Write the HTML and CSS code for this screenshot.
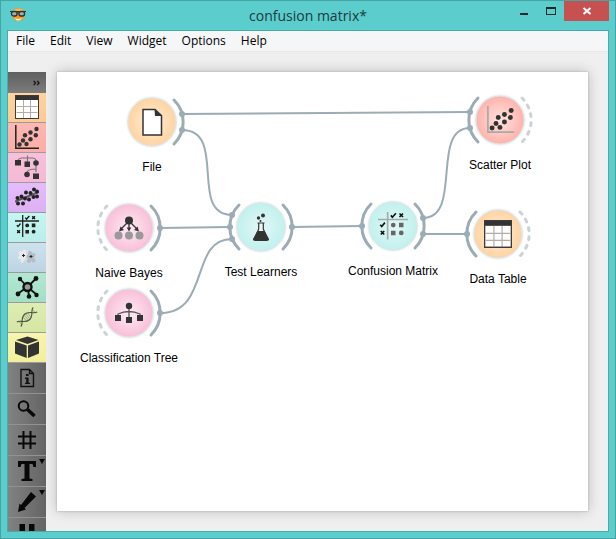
FILE: index.html
```html
<!DOCTYPE html>
<html lang="en">
<head>
<meta charset="utf-8">
<title>confusion matrix*</title>
<link rel="stylesheet" href="styles.css">
</head>
<body>
<svg class="defs" aria-hidden="true">
  <defs>
    <radialGradient id="orange"><stop offset="0" stop-color="#fff0dc"/><stop offset="1" stop-color="#ffd3a0"/></radialGradient>
    <radialGradient id="pink"><stop offset="0" stop-color="#fdebf3"/><stop offset="1" stop-color="#f9bfd8"/></radialGradient>
    <radialGradient id="aqua"><stop offset="0" stop-color="#e4f7f6"/><stop offset="1" stop-color="#c0f1ee"/></radialGradient>
    <radialGradient id="red"><stop offset="0" stop-color="#ffe3e0"/><stop offset="1" stop-color="#ffb3ac"/></radialGradient>
    <symbol id="table" viewBox="0 0 24 24">
      <path d="M.5.5h23v23H.5z" fill="#fff" stroke="#333"/>
      <path d="M1.500 11.500h21M1.500 17.500h21M8.500 5v18M15.500 5v18" fill="none" stroke="#b5aca6"/>
      <path d="M0 0h24v5H0z" fill="#333"/>
      <path d="M.5.5h23v23H.5z" fill="none" stroke="#3c3c3c"/>
    </symbol>
    <symbol id="scatter" viewBox="0 0 24 24">
      <path class="axis" d="M.8 0v23.200H24" fill="none" stroke-width="1.500"/>
      <g fill="#333"><circle cx="4.500" cy="19.500" r="2.200"/><circle cx="8" cy="15.500" r="2.200"/><circle cx="11.500" cy="19" r="2.200"/><circle cx="10" cy="10.300" r="2.200"/><circle cx="15.500" cy="14.300" r="2.200"/><circle cx="15.500" cy="7.500" r="2.200"/><circle cx="20.800" cy="10.300" r="2.200"/><circle cx="21.500" cy="4" r="2.200"/></g>
    </symbol>
    <symbol id="matrix" viewBox="0 0 24 24">
      <path class="axis" d="M0 6h24M7.700 0v22" fill="none" stroke-width="1.300"/>
      <path d="M10.300 2.700l1.200 1.500L14.300 1M1.800 10.200L3 11.600 5.500 8.500M17.200 1.200l2.800 2.800m0-2.800l-2.800 2.800M2.200 15.200L5 18m0-2.800L2.200 18" fill="none" stroke="#111" stroke-width="1.300"/>
      <g class="cells"><circle cx="12.200" cy="10.400" r="1.900"/><path d="M16.800 8.600h3.600v3.600h-3.600zM10.400 14.900H14v3.600h-3.600z"/><circle cx="18.600" cy="16.700" r="1.900"/></g>
    </symbol>
  </defs>
</svg>

<div class="window">
  <header class="titlebar">
    <svg class="app-icon" viewBox="0 0 16 16" aria-hidden="true">
      <circle cx="8.500" cy="7.500" r="6.500" fill="#f79a20"/>
      <ellipse cx="8.500" cy="4" rx="4.500" ry="2.200" fill="#ffb64f"/>
      <path d="M5 11c2 1.500 5 1.500 7-.5-1 4-6 4-7 .5z" fill="#fff0c8"/>
      <rect x="1.500" y="4.500" width="5.500" height="4.500" rx="2" fill="#9ab0b4" stroke="#293335" stroke-width="1.300"/>
      <rect x="9" y="4.500" width="5.500" height="4.500" rx="2" fill="#9ab0b4" stroke="#293335" stroke-width="1.300"/>
      <path d="M0 4.500h16M7 6h2" stroke="#293335"/>
    </svg>
    <h1 class="title">confusion matrix*</h1>
    <div class="controls">
      <button class="control" aria-label="Minimize"><svg viewBox="0 0 27 20"><path d="M10 12h8v2h-8z" fill="#16292a"/></svg></button>
      <button class="control" aria-label="Maximize"><svg viewBox="0 0 27 20"><path d="M9 6h10v8H9zm1 2v5h8V8z" fill="#16292a" fill-rule="evenodd"/></svg></button>
      <button class="control close" aria-label="Close"><svg viewBox="0 0 45 20"><path d="M19.500 7l7 6m0-6l-7 6" stroke="#fff" stroke-width="2"/></svg></button>
    </div>
  </header>

  <div class="client">
    <nav class="menu" aria-label="Main menu">
      <button>File</button><button>Edit</button><button>View</button><button>Widget</button><button>Options</button><button>Help</button>
    </nav>

    <main class="workspace">
      <div class="toolbar" role="toolbar" aria-label="Widgets">
        <button class="expand" aria-label="Expand"><svg viewBox="0 0 8 6"><path d="M.7.500L3 3 .7 5.500M4.700.500L7 3 4.700 5.500" fill="none" stroke="#111" stroke-width="1.400"/></svg></button>
        <button class="tool data" aria-label="Data"><svg><use href="#table"/></svg></button>
        <button class="tool visualize" aria-label="Visualize"><svg><use href="#scatter"/></svg></button>
        <button class="tool classify" aria-label="Classify"><svg viewBox="0 0 24 24">
          <path d="M3 6Q3 3.500 7 3h10q4 0 4 3M12.500.500V7M21 7v10M12 18q0-4 9-4" fill="none" stroke="#777" stroke-width="1.200"/>
          <g fill="#333"><path d="M0 5h6v5.500H0zM9.500 6.500h5.500V12H9.500zM18 18.500h6V24h-6z"/><circle cx="21" cy="8" r="2.800"/><circle cx="12" cy="19.500" r="2.800"/></g></svg></button>
        <button class="tool regression" aria-label="Regression"><svg viewBox="0 0 24 24">
          <path d="M0 16.500L24 7" stroke="#555" stroke-width="2"/>
          <g fill="#222"><circle cx="2.500" cy="13" r="2"/><circle cx="3" cy="18.500" r="2"/><circle cx="8" cy="18.500" r="2"/><circle cx="6.500" cy="11.500" r="2"/><circle cx="10" cy="13.500" r="2"/><circle cx="11" cy="7.500" r="2"/><circle cx="14" cy="14.500" r="2"/><circle cx="15.500" cy="8" r="2"/><circle cx="18.500" cy="12" r="2"/><circle cx="19" cy="4.500" r="2"/><circle cx="22" cy="6.500" r="2"/><circle cx="22" cy="11.500" r="2"/></g></svg></button>
        <button class="tool evaluate" aria-label="Evaluate"><svg><use href="#matrix"/></svg></button>
        <button class="tool unsupervised" aria-label="Unsupervised"><svg viewBox="0 0 24 24">
          <g fill="#e9e9e9"><circle cx="5.500" cy="8" r="2"/><circle cx="9.500" cy="6.500" r="2"/><circle cx="5" cy="12.500" r="2"/><circle cx="8.500" cy="13.500" r="2"/><circle cx="8" cy="10" r="3.500"/><circle cx="7" cy="16" r="1.800"/></g>
          <g fill="#b6bcc0"><circle cx="15" cy="8" r="2"/><circle cx="18.500" cy="10" r="2"/><circle cx="13.500" cy="11.500" r="2"/><circle cx="16" cy="12" r="3.500"/><circle cx="14" cy="16" r="2"/><circle cx="18.500" cy="15.500" r="2"/></g>
          <path d="M7 10.500h3M8.500 9v3M14.500 11.500h3M16 10v3" stroke="#222"/></svg></button>
        <button class="tool network" aria-label="Network"><svg viewBox="0 0 24 24">
          <path d="M12.500 12L5 4M12.500 12L21 3.500M12.500 12L3 18.500M12.500 12L14 20.500M12.500 12l9 7.500" stroke="#111" stroke-width="1.800"/>
          <circle cx="12.500" cy="12" r="4" fill="#999" stroke="#111" stroke-width="2.400"/>
          <g fill="#111"><circle cx="5" cy="4" r="2.200"/><circle cx="21" cy="3.500" r="2.400"/><circle cx="3" cy="19" r="2.400"/><circle cx="14" cy="21.500" r="2.300"/><circle cx="21.500" cy="20" r="2.200"/></g></svg></button>
        <button class="tool bio" aria-label="Bioinformatics"><svg viewBox="0 0 24 24">
          <g transform="translate(12 12) rotate(-42)" fill="none">
            <path d="M-9-2.500v5M-3-3v6M-1-3.500v7M1-3.500v7M3-3v6M9-2.500v5" stroke="#8f967d" stroke-width=".8"/>
            <path d="M-11 3C-7 3-6-3.700 0-3.700S7 3 11 3M-11-3C-7-3-6 3.700 0 3.700S7-3 11-3" stroke="#4c5044" stroke-width="1.100"/>
          </g></svg></button>
        <button class="tool box" aria-label="Prototypes"><svg viewBox="0 0 24 24">
          <path d="M12.500 1.500L23.500 5l-11 4L1 5zM0 6.500l11.700 4V23L0 18.500zM24 6.500l-11 4V23l11-4.500z" fill="#333"/></svg></button>
        <button class="tool action" aria-label="Information"><svg viewBox="0 0 24 24">
          <path d="M6 3.500h8.500l4 4v13H6zM14.500 3.500v4h4" fill="none" stroke="#111" stroke-width="1.400"/>
          <path d="M11 8h2.600v2H11zM10 11.500h3.600v5.200H15V18h-5v-1.300h1.200V13H10z" fill="#111"/></svg></button>
        <button class="tool action" aria-label="Find"><svg viewBox="0 0 24 24">
          <circle cx="8.500" cy="9" r="4.800" fill="none" stroke="#080808" stroke-width="2"/><path d="M12.500 12.500l7 6.500" stroke="#080808" stroke-width="3.500"/></svg></button>
        <button class="tool action" aria-label="Grid"><svg viewBox="0 0 24 24"><path d="M8.500 3v18M15.500 3v18M3 8.500h18M3 15.500h18" stroke="#080808" stroke-width="2"/></svg></button>
        <button class="tool action drop" aria-label="Text"><svg viewBox="0 0 24 24"><path d="M3 2h18v6h-2.500l-1-3h-3v14.500l3 .5v2H6.500v-2l3-.5V5h-3l-1 3H3z" fill="#080808"/></svg></button>
        <button class="tool action drop" aria-label="Arrow"><svg viewBox="0 0 24 24"><path d="M16 2l5 4.500L9.500 18l1.500 1.500L3 22l1.500-8.500L6 15z" fill="#080808"/></svg></button>
        <button class="tool action" aria-label="Pause"><svg viewBox="0 0 24 24"><path d="M4.500 3H10v18H4.500zM14 3h5.500v18H14z" fill="#080808"/></svg></button>
      </div>

      <section class="canvas" aria-label="Workflow">
        <svg class="links" viewBox="57 72 531 439" aria-hidden="true">
          <path d="M182 114L470 112M182 130C228 130 188 215 232 215M160 228L230 227M160 313C211 313 189 239 232 239M292 227L362 226M423 218C463 218 430 128 470 128M423 234H467"/>
          <g><circle cx="182" cy="114" r="3"/><circle cx="182" cy="130" r="3"/><circle cx="160" cy="228" r="3"/><circle cx="160" cy="313" r="3"/><circle cx="232" cy="215" r="3"/><circle cx="230" cy="227" r="3"/><circle cx="232" cy="239" r="3"/><circle cx="292" cy="227" r="3"/><circle cx="362" cy="226" r="3"/><circle cx="423" cy="218" r="3"/><circle cx="423" cy="234" r="3"/><circle cx="470" cy="112" r="3"/><circle cx="470" cy="128" r="3"/><circle cx="467" cy="234" r="3"/></g>
        </svg>

        <div class="node file"><svg viewBox="-36 -36 72 72">
          <circle class="disc" r="24" fill="url(#orange)"/><path class="arc" d="M22-22A31 31 0 0 1 22 22"/>
          <path d="M-9-12.500H3L9.500-6.500V13H-9z" fill="#fff" stroke="#333" stroke-width="1.500"/><path d="M2.500-13L10-6H3z" fill="#333"/></svg><span>File</span></div>

        <div class="node bayes"><svg viewBox="-36 -36 72 72">
          <circle class="disc" r="24" fill="url(#pink)"/><path class="arc" d="M22-22A31 31 0 0 1 22 22"/><path class="arc open" d="M-22-22A31 31 0 0 0-22 22"/>
          <path d="M0-7L-8 1M0-7V1M0-7L8 1" stroke="#333" stroke-width="1.300"/><path d="M-10 3.500l1.500-5 3.500 3.500zM10 3.500l-1.500-5L5 2zM-2.300-.5h4.600L0 3.500z" fill="#333"/>
          <circle cy="-7.500" r="4" fill="#333"/><g fill="#999"><circle cx="-10.500" cy="7.500" r="4"/><circle cy="7.500" r="4"/><circle cx="10.500" cy="7.500" r="4"/></g></svg><span>Naive Bayes</span></div>

        <div class="node tree"><svg viewBox="-36 -36 72 72">
          <circle class="disc" r="24" fill="url(#pink)"/><path class="arc" d="M22-22A31 31 0 0 1 22 22"/><path class="arc open" d="M-22-22A31 31 0 0 0-22 22"/>
          <path d="M-11 3V1Q0-4 11 1v2M0-6V5" fill="none" stroke="#555" stroke-width="1.300"/><circle cy="-7" r="3.200" fill="#333"/><path d="M-14 2h6v6h-6zM-3 4h6v6h-6zM8 2h6v6H8z" fill="#333"/></svg><span>Classification Tree</span></div>

        <div class="node learners"><svg viewBox="-36 -36 72 72">
          <circle class="disc" r="24" fill="url(#aqua)"/><path class="arc" d="M22-22A31 31 0 0 1 22 22"/><path class="arc" d="M-22-22A31 31 0 0 0-22 22"/>
          <path d="M-3.500-4h7M-2.300-4v6L-7 12.500h14L2.300 2v-6" fill="#e8f7f6" stroke="#333" stroke-width="1.200"/><path d="M-3.500 4h7L8 12q0 2-2 2H-6q-2 0-2-2z" fill="#333"/><circle cx="-2.500" cy="-9" r="1.700" fill="#333"/><circle cx="2" cy="-11.500" r="2" fill="#333"/><circle cx="-.5" cy="-6" r="1" fill="#333"/></svg><span>Test Learners</span></div>

        <div class="node confusion"><svg viewBox="-36 -36 72 72">
          <circle class="disc" r="24" fill="url(#aqua)"/><path class="arc" d="M22-22A31 31 0 0 1 22 22"/><path class="arc" d="M-22-22A31 31 0 0 0-22 22"/>
          <use href="#matrix" x="-15" y="-14" width="30" height="30"/></svg><span>Confusion Matrix</span></div>

        <div class="node plot"><svg viewBox="-36 -36 72 72">
          <circle class="disc" r="24" fill="url(#red)"/><path class="arc" d="M-22-22A31 31 0 0 0-22 22"/><path class="arc open" d="M22-22A31 31 0 0 1 22 22"/>
          <use href="#scatter" x="-13" y="-14" width="27" height="27"/></svg><span>Scatter Plot</span></div>

        <div class="node datatable"><svg viewBox="-36 -36 72 72">
          <circle class="disc" r="24" fill="url(#orange)"/><path class="arc" d="M-22-22A31 31 0 0 0-22 22"/><path class="arc open" d="M22-22A31 31 0 0 1 22 22"/>
          <use href="#table" x="-14" y="-14" width="28" height="28"/></svg><span>Data Table</span></div>
      </section>
    </main>
  </div>
</div>
</body>
</html>
```

FILE: styles.css
```css
* { box-sizing: border-box; }

body {
  margin: 0;
  font-family: "Open Sans", "Noto Sans", sans-serif;
  font-size: 12px;
  color: #000;
}

button {
  margin: 0;
  padding: 0;
  border: 0;
  background: none;
  font: inherit;
  color: inherit;
}

svg { display: block; }

.defs {
  position: absolute;
  width: 0;
  height: 0;
}

.window {
  display: flex;
  flex-direction: column;
  height: 100vh;
  padding: 0 7px 7px;
  background: #5bcdcd;
  box-shadow: inset 0 0 0 1px #48a3a3;
}

.titlebar {
  display: grid;
  grid-template-columns: 100px 1fr 100px;
  align-items: center;
  height: 30px;
  flex: none;
}

.app-icon {
  width: 16px;
  height: 16px;
  margin-left: 3px;
}

.title {
  margin: 0;
  padding-top: 2px;
  font-size: 14px;
  line-height: 28px;
  font-weight: 400;
  text-align: center;
  color: #1c3b3b;
}

.controls {
  display: flex;
  align-self: start;
  justify-content: flex-end;
  padding-top: 1px;
}

.control {
  width: 27px;
  height: 20px;
}

.control.close {
  width: 45px;
  background: #c75050;
}

.client {
  display: flex;
  flex: 1;
  flex-direction: column;
  min-height: 0;
  border: 1px solid #49aaaa;
  background: #efefef;
}

.menu {
  display: flex;
  flex: none;
  gap: 15px;
  height: 21px;
  padding-left: 8px;
  border-bottom: 1px solid #e6e8ea;
  background: #f5f6f7;
}

.menu button {
  line-height: 20px;
}

.workspace {
  display: flex;
  flex: 1;
  gap: 11px;
  min-height: 0;
  padding: 20px 20px 0 0;
}

.toolbar {
  display: flex;
  flex: none;
  flex-direction: column;
  width: 38px;
  overflow: hidden;
}

.expand {
  display: flex;
  flex: none;
  align-items: center;
  justify-content: flex-end;
  height: 21px;
  padding-right: 6px;
  background: linear-gradient(#606060, #7c7c7c);
}

.expand svg {
  width: 7px;
  height: 6px;
}

.tool {
  position: relative;
  display: flex;
  flex: none;
  align-items: center;
  justify-content: center;
  height: 30px;
  padding-bottom: 1px;
  border-bottom: 1px solid #9b9b9b;
}

.tool svg {
  width: 24px;
  height: 24px;
}

.axis { stroke: var(--axis, #222); }
.cells { fill: var(--cells, #222); }

.data { background: linear-gradient(#ffd39f, #fbcb92); }
.visualize { background: linear-gradient(#ffb7b1, #faaea8); }
.classify { background: linear-gradient(#f9c0db, #f4b9d5); }
.regression { background: linear-gradient(#e5bcfb, #dcb1f5); }
.evaluate { background: linear-gradient(#c6f5f2, #b9eeea); }
.unsupervised { background: linear-gradient(#cce3ee, #bed4e3); }
.network { background: linear-gradient(#b1e8d2, #a3dfc7); }
.bio { background: linear-gradient(#deedb2, #d5e6a5); }
.box { background: linear-gradient(#f8f5ad, #f2ef9c); }

.action {
  height: 31px;
  padding-bottom: 0;
  border-color: #929292;
  background: linear-gradient(90deg, #828282, #646464);
}

.drop::after {
  content: "";
  position: absolute;
  top: 3px;
  right: 1px;
  border: 3px solid transparent;
  border-top: 5px solid #080808;
  border-bottom: 0;
}

.canvas {
  position: relative;
  flex: 1;
  margin-bottom: 20px;
  background: #fff;
  box-shadow: 0 0 2px #aaa, 0 0 12px rgba(0, 0, 0, .22);
}

.links {
  position: absolute;
  top: 0;
  left: 0;
  width: 531px;
  height: 439px;
  fill: none;
  stroke: #9cacb4;
  stroke-width: 2;
}

.links g {
  fill: #9cacb4;
  stroke: none;
}

.node {
  position: absolute;
  display: flex;
  flex-direction: column;
  align-items: center;
  width: 120px;
  font-family: "Liberation Sans", Arial, sans-serif;
  line-height: 18px;
  --axis: #a3abab;
  --cells: #666;
}

.node svg {
  width: 72px;
  height: 72px;
}

.disc {
  stroke: #dfe5e7;
  filter: drop-shadow(0 0 1px rgba(120, 150, 165, .4));
}

.arc {
  fill: none;
  stroke: #9cacb4;
  stroke-width: 3;
  stroke-linecap: round;
}

.arc.open {
  stroke: #cad4d8;
  stroke-dasharray: 3 6;
}

/* Node positions on the workflow canvas */
.file { left: 35px; top: 14px; }
.bayes { left: 12px; top: 120px; }
.tree { left: 12px; top: 205px; }
.learners { left: 144px; top: 119px; }
.confusion { left: 276px; top: 118px; }
.plot { left: 383px; top: 12px; }
.datatable { left: 381px; top: 126px; }
```
